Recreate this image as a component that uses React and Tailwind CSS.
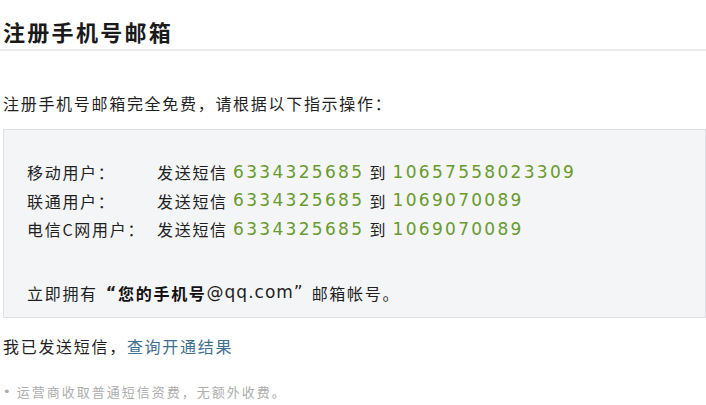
const font = { fontFamily: '"DejaVu Sans", "Noto Sans CJK SC", sans-serif' };

const rows = [
  { label: '移动用户：', code: '6334325685', to: '10657558023309' },
  { label: '联通用户：', code: '6334325685', to: '1069070089' },
  { label: '电信C网用户：', code: '6334325685', to: '1069070089' },
];

export default function App() {
  return (
    <div className="h-[405px] w-[706px] overflow-hidden bg-white text-[#1f1f1f] [font-family:'Noto_Sans_CJK_SC','DejaVu_Sans',sans-serif]">
      <div className="h-[51px] border-b-2 border-[#ebebeb] pl-[3px] pt-[18px]">
        <h1 className="flex h-[26px] items-center text-[22px] font-bold tracking-[2.3px] text-[#1a1a1a]">注册手机号邮箱</h1>
      </div>

      <p className="mt-[40px] flex h-[24px] items-center pl-[3px] text-[16px] tracking-[1.7px]">
        注册手机号邮箱完全免费，请根据以下指示操作：
      </p>

      <div className="ml-[3px] mt-[14px] h-[189px] border border-[#dfe1e4] bg-[#f4f5f7] pl-[23px] pt-[28px] text-[16px] tracking-[1.7px]">
        {rows.map((r) => (
          <div key={r.label} className="flex h-[28.5px] items-center whitespace-pre">
            <span className="w-[130px] shrink-0">{r.label}</span>
            <span>发送短信 </span>
            <span className="text-[17px] tracking-[2.3px] text-[#689a2c]" style={font}>{r.code}</span>
            <span> 到 </span>
            <span className="text-[17px] tracking-[2.3px] text-[#689a2c]" style={font}>{r.to}</span>
          </div>
        ))}
        <div className="mt-[35px] flex h-[28px] items-center">
          <span>立即拥有</span>
          <span className="ml-[8px] font-bold" style={font}>“</span>
          <b className="font-bold text-[#111]">您的手机号</b>
          <span className="text-[17px] tracking-[1px]" style={font}>@qq.com”</span>
          <span className="ml-[8px]">邮箱帐号。</span>
        </div>
      </div>

      <div className="mt-[16px] flex h-[24px] items-center pl-[3px] text-[16px] tracking-[1.7px]">
        <span>我已发送短信，</span>
        <a className="text-[#3f6f8f]">查询开通结果</a>
      </div>

      <p className="mt-[24px] flex h-[20px] items-center pl-[3px] text-[13px] tracking-[2px] text-[#adadad]">
        <span className="mr-[4px]" style={font}>•</span>
        运营商收取普通短信资费，无额外收费。
      </p>
    </div>
  );
}
